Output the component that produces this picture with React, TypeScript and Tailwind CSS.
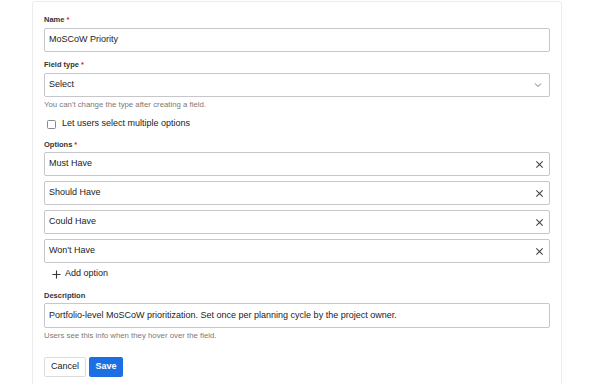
import React from "react";

const font = { fontFamily: "'Liberation Sans', Arial, sans-serif" };

function Label({ children, className = "" }: { children: React.ReactNode; className?: string }) {
  return (
    <div className={"h-[12px] flex items-center text-[7.5px] font-bold text-[#333] " + className}>
      {children}
      <span className="text-[#d22] ml-[2px]">*</span>
    </div>
  );
}

function X() {
  return (
    <svg width="9" height="9" viewBox="0 0 10 10" className="text-[#444]">
      <path d="M1.5 1.5 L8.5 8.5 M8.5 1.5 L1.5 8.5" stroke="currentColor" strokeWidth="1.2" fill="none" />
    </svg>
  );
}

function OptionInput({ value, className = "" }: { value: string; className?: string }) {
  return (
    <div
      className={
        "h-[24px] border border-[#c6c6cb] rounded-[2px] flex items-center justify-between pl-[4px] pr-[5px] text-[9px] text-[#222] " +
        className
      }
    >
      <span>{value}</span>
      <X />
    </div>
  );
}

export default function App() {
  return (
    <div className="w-[605px] h-[384px] bg-white overflow-hidden" style={font}>
      <div className="ml-[32px] mt-[1px] w-[530px] h-[400px] border border-[#ececec] rounded-[3px] px-[11px] pt-[12px] flex flex-col">
        <Label>Name</Label>
        <div className="mt-[2px] h-[24px] border border-[#c6c6cb] rounded-[2px] flex items-center pl-[4px] text-[9px] text-[#222]">
          MoSCoW Priority
        </div>

        <Label className="mt-[7px]">Field type</Label>
        <div className="mt-[2px] h-[24px] border border-[#c6c6cb] rounded-[2px] flex items-center justify-between pl-[4px] pr-[7px] text-[9px] text-[#222]">
          <span>Select</span>
          <svg width="8" height="6" viewBox="0 0 8 6">
            <path d="M1 1.5 L4 4.5 L7 1.5" stroke="#777" strokeWidth="1" fill="none" />
          </svg>
        </div>
        <div className="mt-[2px] h-[11px] flex items-center text-[7.8px] text-[#7a7a7a]">
          You can't change the type after creating a field.
        </div>

        <div className="mt-[7px] h-[14px] flex items-center pl-[3px] gap-[6px] text-[9px] text-[#222]">
          <div className="w-[9px] h-[9px] border border-[#888] rounded-[1.5px] bg-white" />
          <span>Let users select multiple options</span>
        </div>

        <Label className="mt-[8px]">Options</Label>
        <div className="mt-[1px] flex flex-col gap-[5px]">
          <OptionInput value="Must Have" />
          <OptionInput value="Should Have" />
          <OptionInput value="Could Have" />
          <OptionInput value="Won't Have" />
        </div>

        <div className="mt-[4px] h-[14px] flex items-center pl-[8px] gap-[4px] text-[9px] text-[#222]">
          <svg width="9" height="9" viewBox="0 0 10 10">
            <path d="M5 0.5 V9.5 M0.5 5 H9.5" stroke="#333" strokeWidth="1.2" fill="none" />
          </svg>
          <span>Add option</span>
        </div>

        <div className="mt-[9px] h-[12px] flex items-center text-[7.5px] font-bold text-[#333]">Description</div>
        <div className="mt-[1px] h-[25px] border border-[#c6c6cb] rounded-[2px] flex items-center pl-[4px] text-[9px] text-[#222]">
          Portfolio-level MoSCoW prioritization. Set once per planning cycle by the project owner.
        </div>
        <div className="mt-[2px] h-[11px] flex items-center text-[7.8px] text-[#7a7a7a]">
          Users see this info when they hover over the field.
        </div>

        <div className="mt-[16px] flex gap-[3px]">
          <button className="h-[20px] w-[42px] border border-[#dcdcdc] rounded-[2px] bg-white text-[9px] text-[#222] flex items-center justify-center">
            Cancel
          </button>
          <button className="h-[20px] w-[34px] rounded-[2px] bg-[#1c6fe3] text-white text-[9px] font-bold flex items-center justify-center">
            Save
          </button>
        </div>
      </div>
    </div>
  );
}
